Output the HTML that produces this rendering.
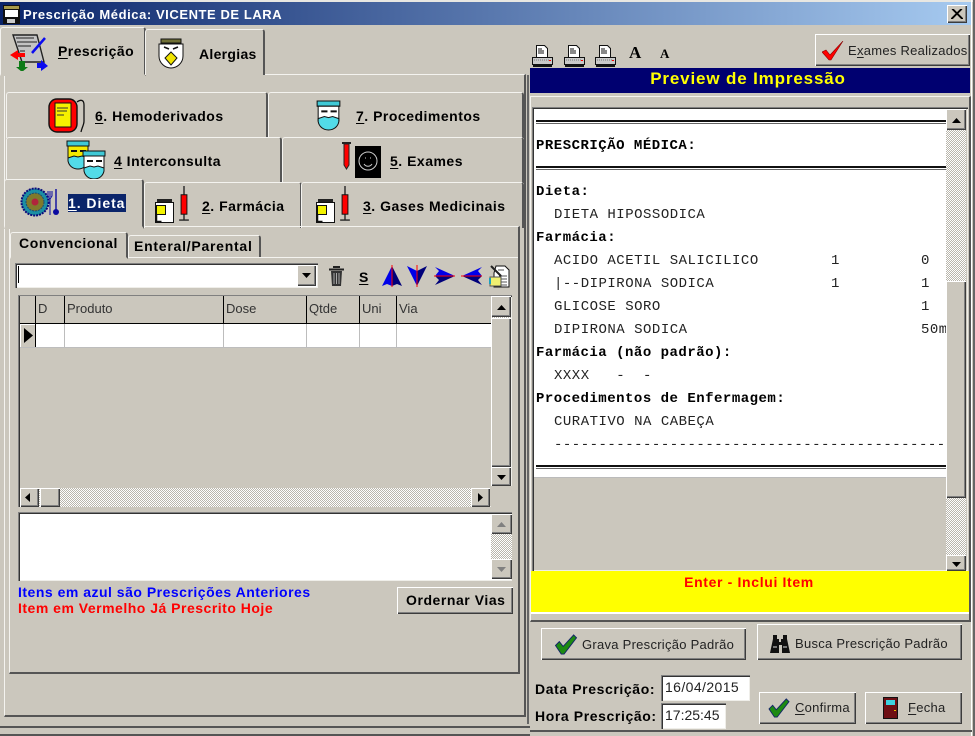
<!DOCTYPE html>
<html><head><meta charset="utf-8"><style>
html,body{margin:0;padding:0;width:975px;height:736px;overflow:hidden;background:#cbc7bd}
body{position:relative;font-family:"Liberation Sans",sans-serif;color:#000}
div,span.a,svg{position:absolute}
.x{position:absolute;white-space:nowrap}
.b{font-weight:bold;font-size:14px;letter-spacing:.5px;line-height:18px}
.n{font-size:13px;line-height:18px;color:#222;letter-spacing:.27px}
.r{background:#cbc7bd;box-shadow:inset 1px 1px #fff,inset -1px -1px #3c3c3c,inset -2px -2px #808080}
.s{background:#fff;box-shadow:inset 1px 1px #808080,inset 2px 2px #333,inset -1px -1px #efeee9}
.t{background:#cbc7bd;box-sizing:border-box;border-top:1px solid #f4f3ef;border-left:1px solid #f4f3ef;border-right:2px solid #555;border-radius:3px 3px 0 0}
.p{box-sizing:border-box;border-style:solid;border-width:1px 2px 2px 1px;border-color:#f4f3ef #555 #555 #f4f3ef}
.d{background:repeating-conic-gradient(#fff 0 25%,#b9b6ac 0 50%) 0 0/2px 2px}
.v{background:#000;width:1px;top:296px;height:27px}
.w{background:#bdbdbd;width:1px;top:324px;height:23px}
.h{font-size:13px;line-height:16px;color:#333;top:301px}
.m{font-family:"Liberation Mono",monospace;font-size:14px;letter-spacing:.5px;line-height:18px;color:#222;white-space:pre}
.mb{font-weight:bold;color:#000}
.rule{left:536px;width:410px;height:4px;border-top:2px solid #111;border-bottom:1px solid #666;box-sizing:border-box}
.l{font-weight:bold;font-size:14px;line-height:17px;letter-spacing:.5px}
u{text-underline-offset:2px}
</style></head><body>
<svg width="0" height="0" style="position:absolute"><defs>
<symbol id="mask" viewBox="0 0 24 30"><path d="M1 1h22v5H1z" fill="#3fc9d6" stroke="#111"/><path d="M2 6h20v14H2z" fill="#fff" stroke="#111"/><path d="M5 10h6v2H5zM14 10h6v2h-6z" fill="#111"/><path d="M2 18l6-2 4 1 4-1 6 2v3c-1 5-5 8-10 8s-9-3-10-8z" fill="#52dbe8" stroke="#111"/></symbol>
<symbol id="bottle" viewBox="0 0 20 24"><path d="M2 0h15v3H2z" fill="#222"/><path d="M.5 3.500h18v20H.500z" fill="#fff" stroke="#111"/><path d="M1.500 6.500h9v9h-9z" fill="#f3f300" stroke="#111"/><path d="M1.500 15.500v7h5" fill="none" stroke="#111" stroke-width="1.500"/></symbol>
<symbol id="syr" viewBox="0 0 10 36"><path d="M5 0v10M5 28v7M0 35h10" stroke="#222" stroke-width="1.4" fill="none"/><rect x="2" y="9" width="6" height="20" fill="#f00" stroke="#111"/></symbol>
<symbol id="printer" viewBox="0 0 21 22"><path d="M4.500.5h8l3 3v10h-11z" fill="#fff" stroke="#111"/><path d="M6 4h4M6 6h6M6 8h6" stroke="#111"/><rect x=".5" y="12.500" width="20" height="7" fill="#c9c9c9" stroke="#111"/><path d="M2 15h15" stroke="#777" stroke-dasharray="1 1"/><rect x="17" y="15" width="2" height="1" fill="#f00"/><path d="M1 21h19" stroke="#111" stroke-width="2"/></symbol>
<symbol id="check" viewBox="0 0 24 22"><path d="M1 12L5 8l4 5L20 1l3 3L10 21H7z" fill="#1c8a12" stroke="#12226a"/></symbol>
<symbol id="upb" viewBox="0 0 9 5"><path d="M4.500 0L9 5H0z"/></symbol>
<symbol id="dnb" viewBox="0 0 9 5"><path d="M0 0h9L4.500 5z"/></symbol>
</defs></svg>

<!-- Window chrome -->
<div style="left:0;top:0;width:975px;height:2px;background:#e8e7e2"></div>
<div style="left:0;top:2px;width:971px;height:23px;background:linear-gradient(90deg,#0a246a,#a6caf0)"></div>
<svg style="left:3px;top:5px" width="17" height="19" viewBox="0 0 17 19"><rect width="17" height="19" fill="#111"/><rect x="1" y="1" width="15" height="3" fill="#a69a4a"/><rect x="2" y="5" width="13" height="7" fill="#fff"/><rect x="4" y="14" width="8" height="4" fill="#ccc"/></svg>
<div class="x" style="left:23px;top:6px;font-weight:bold;font-size:13px;line-height:17px;color:#fff;letter-spacing:.57px">Prescrição Médica: VICENTE DE LARA</div>
<div class="r" style="left:947px;top:5px;width:20px;height:18px"></div>
<svg style="left:951px;top:9px" width="12" height="10"><path d="M1 0l10 10M11 0L1 10M2 0l10 10M10 0L0 10" stroke="#000" stroke-width="1.2"/></svg>
<div style="left:971px;top:0;width:1px;height:736px;background:#fff"></div>
<div style="left:973px;top:0;width:2px;height:736px;background:#666"></div>
<div style="left:0;top:726px;width:530px;height:2px;background:#555"></div>
<div style="left:0;top:734px;width:530px;height:2px;background:#555"></div>
<div style="left:530px;top:730px;width:442px;height:2px;background:#555"></div>
<div style="left:527px;top:75px;width:2px;height:649px;background:#666"></div>

<!-- Left main panel -->
<div class="p" style="left:4px;top:74px;width:522px;height:643px"></div>
<div class="t" style="left:0;top:27px;width:146px;height:49px;border-bottom:2px solid #cbc7bd"></div>
<div class="t" style="left:145px;top:29px;width:120px;height:46px"></div>
<svg style="left:9px;top:33px" width="39" height="38" viewBox="0 0 39 38"><path d="M4 2h24l7 27H13z" fill="#c4c4c4" stroke="#222" stroke-width="1.4"/><path d="M7 5h18M8 9h20M9 13h13M11 18h5" stroke="#222"/><path d="M23 20L36 5" stroke="#0b0bf0" stroke-width="2.500"/><path d="M1 22l8-5v3h7v4H9v3z" fill="#f00"/><path d="M10 28h6v6h3l-6 5-6-5h3z" fill="#0e7a17"/><path d="M28 30h4v-3l7 6-7 5v-3h-4z" fill="#0b0bf0"/></svg>
<div class="x b" style="left:58px;top:42px;letter-spacing:.45px"><u>P</u>rescrição</div>
<svg style="left:158px;top:38px" width="26" height="31" viewBox="0 0 26 31"><path d="M3 1h20v4H3z" fill="#6f6f35" stroke="#111"/><path d="M1 6h24v12c0 7-6 12-12 12S1 25 1 18z" fill="#fff" stroke="#111"/><path d="M6 9l5 2M20 9l-5 2" stroke="#111" stroke-width="1.500"/><path d="M13 14l6 6-6 7-6-7z" fill="#f0e400" stroke="#111"/></svg>
<div class="x b" style="left:199px;top:45px;letter-spacing:.3px">Alergias</div>

<!-- Tab rows -->
<div class="t" style="left:6px;top:92px;width:262px;height:46px"></div>
<div class="t" style="left:268px;top:92px;width:256px;height:46px"></div>
<svg style="left:48px;top:97px" width="38" height="38" viewBox="0 0 38 38"><rect x="1" y="2" width="28" height="33" rx="8" fill="#f00" stroke="#111" stroke-width="1.4"/><rect x="7" y="6" width="16" height="24" fill="#f6f000" stroke="#111"/><path d="M9 11h11M9 14h10M9 18h7" stroke="#333"/><path d="M29 5c4-3 7-2 7 3v16c0 4-2 6-3 11" fill="none" stroke="#111" stroke-width="1.300"/></svg>
<div class="x b" style="left:95px;top:107px"><u>6</u>. Hemoderivados</div>
<svg style="left:316px;top:100px" width="25" height="31"><use href="#mask"/></svg>
<div class="x b" style="left:356px;top:107px"><u>7</u>. Procedimentos</div>

<div class="t" style="left:6px;top:137px;width:276px;height:46px"></div>
<div class="t" style="left:282px;top:137px;width:242px;height:46px"></div>
<svg style="left:66px;top:140px" width="24" height="30" viewBox="0 0 24 30"><path d="M1 1h22v5H1z" fill="#3fc9d6" stroke="#111"/><path d="M2 6h20v14H2z" fill="#f4ea00" stroke="#111"/><path d="M5 10h6v2H5zM14 10h6v2h-6z" fill="#111"/><path d="M2 18l6-2 4 1 4-1 6 2v3c-1 5-5 8-10 8s-9-3-10-8z" fill="#52dbe8" stroke="#111"/></svg>
<svg style="left:82px;top:150px" width="24" height="30"><use href="#mask"/></svg>
<div class="x b" style="left:114px;top:152px"><u>4</u> Interconsulta</div>
<svg style="left:342px;top:142px" width="10" height="28" viewBox="0 0 10 28"><path d="M0 1h9" stroke="#222" stroke-width="2"/><path d="M2 2h5v21l-2.500 4L2 23z" fill="#f00" stroke="#222"/></svg>
<svg style="left:355px;top:146px" width="26" height="32" viewBox="0 0 26 32"><rect width="26" height="32" fill="#000"/><circle cx="13" cy="15" r="9" fill="none" stroke="#ccc"/><path d="M9 18c2 3 6 3 8 0M10 12h1M15 12h1" stroke="#ccc" fill="none"/></svg>
<div class="x b" style="left:390px;top:152px"><u>5</u>. Exames</div>

<div class="t" style="left:144px;top:182px;width:158px;height:46px"></div>
<div class="t" style="left:301px;top:182px;width:223px;height:46px"></div>
<div class="p" style="left:9px;top:226px;width:511px;height:448px"></div>
<div class="t" style="left:4px;top:179px;width:140px;height:50px;border-bottom:3px solid #cbc7bd"></div>
<svg style="left:20px;top:187px" width="42" height="30" viewBox="0 0 42 30"><circle cx="15" cy="15" r="13.500" fill="#1c8fa4" stroke="#0a0a7a" stroke-width="2" stroke-dasharray="2 1"/><circle cx="15" cy="15" r="9" fill="#7f7a2c" stroke="#174a7a" stroke-dasharray="2 1"/><circle cx="15" cy="15" r="3.500" fill="#b0243c"/><path d="M28 4v5l2 3v16M32 4v5l-2 3M30 4v6" stroke="#0a0aa0" fill="none"/><path d="M36 2v22" stroke="#0a0aa0" stroke-width="1.400"/><circle cx="36" cy="25" r="3" fill="#0a0aa0"/></svg>
<div class="x b" style="left:68px;top:194px;width:58px;height:18px;background:#0a246a;color:#fff;letter-spacing:.95px"><u>1</u>. Dieta</div>
<svg style="left:155px;top:199px" width="20" height="24"><use href="#bottle"/></svg>
<svg style="left:179px;top:186px" width="10" height="35"><use href="#syr"/></svg>
<div class="x b" style="left:202px;top:197px"><u>2</u>. Farmácia</div>
<svg style="left:316px;top:199px" width="20" height="24"><use href="#bottle"/></svg>
<svg style="left:340px;top:186px" width="10" height="35"><use href="#syr"/></svg>
<div class="x b" style="left:363px;top:197px"><u>3</u>. Gases Medicinais</div>

<!-- Sub tabs -->
<div style="left:10px;top:257px;width:508px;height:1px;background:#f4f3ef"></div>
<div class="t" style="left:10px;top:232px;width:118px;height:27px;border-bottom:2px solid #cbc7bd"></div>
<div class="t" style="left:128px;top:235px;width:133px;height:22px"></div>
<div class="x b" style="left:19px;top:234px;letter-spacing:.6px">Convencional</div>
<div class="x b" style="left:134px;top:237px;letter-spacing:.75px">Enteral/Parental</div>

<!-- Combo + toolbar -->
<div class="s" style="left:15px;top:263px;width:303px;height:25px"></div>
<div style="left:18px;top:266px;width:1px;height:17px;background:#000"></div>
<div class="r" style="left:297px;top:265px;width:19px;height:21px"></div>
<svg style="left:302px;top:273px" width="9" height="5"><use href="#dnb"/></svg>
<svg style="left:328px;top:265px" width="17" height="22" viewBox="0 0 17 22"><path d="M5 2h7M1 4.500h15" stroke="#222" stroke-width="2"/><path d="M3 6h11l-1 15H4z" fill="#333"/><path d="M6 8v11M8.500 8v11M11 8v11" stroke="#aaa"/></svg>
<div class="x b" style="left:359px;top:268px;font-size:14px;letter-spacing:0"><u>S</u></div>
<svg style="left:382px;top:264px" width="128" height="24" viewBox="0 0 128 24"><path d="M0 22L10 2v20L5 20z" fill="#0000e8"/><path d="M20 22L10 2v20l5-2z" fill="#00007a"/><path d="M10 1v22" stroke="#f00"/><path d="M25 2l10 5v15z" fill="#0000e8"/><path d="M45 2L35 7v15z" fill="#00007a"/><path d="M35 1v22" stroke="#f00"/><path d="M53 3l20 9H53l4-5z" fill="#0000e8"/><path d="M53 21l20-9H53l4 4z" fill="#00007a"/><path d="M52 12h21" stroke="#f00"/><path d="M100 3L80 12h20l-4-5z" fill="#0000e8"/><path d="M100 21L80 12h20l-4 4z" fill="#00007a"/><path d="M79 12h21" stroke="#f00"/><path d="M114 2h9l4 4v17h-15V9z" fill="#fff" stroke="#111"/><path d="M116 6h6M117 12h8M117 15h8M117 18h8M117 21h8" stroke="#555"/><path d="M108 13h11v9h-11z" fill="#f0f070" stroke="#555"/><path d="M109 2l10 10" stroke="#222" stroke-width="2"/><path d="M108 14v6" stroke="#18a0c0" stroke-width="2"/></svg>

<!-- Grid -->
<div class="s" style="left:18px;top:295px;width:494px;height:212px;background:#cbc7bd"></div>
<div style="left:20px;top:296px;width:471px;height:28px;background:#cbc7bd"></div>
<div style="left:20px;top:323px;width:472px;height:1px;background:#000"></div>
<div style="left:35px;top:324px;width:456px;height:23px;background:#fff"></div>
<div style="left:20px;top:347px;width:471px;height:1px;background:#bdbdbd"></div>
<div class="v" style="left:35px"></div><div class="v" style="left:64px"></div><div class="v" style="left:223px"></div><div class="v" style="left:306px"></div><div class="v" style="left:359px"></div><div class="v" style="left:396px"></div>
<div class="w" style="left:64px"></div><div class="w" style="left:223px"></div><div class="w" style="left:306px"></div><div class="w" style="left:359px"></div><div class="w" style="left:396px"></div>
<div class="x h" style="left:38px">D</div><div class="x h" style="left:67px">Produto</div><div class="x h" style="left:226px">Dose</div><div class="x h" style="left:309px">Qtde</div><div class="x h" style="left:362px">Uni</div><div class="x h" style="left:399px">Via</div>
<div style="left:20px;top:324px;width:15px;height:23px;background:#cbc7bd;border-right:1px solid #000;box-shadow:inset 1px 1px #fff"></div>
<svg style="left:24px;top:328px" width="9" height="15"><path d="M0 0l9 7.500L0 15z"/></svg>
<!-- grid scrollbars -->
<div class="d" style="left:491px;top:296px;width:20px;height:190px"></div>
<div class="r" style="left:491px;top:296px;width:20px;height:21px"></div>
<svg style="left:497px;top:305px" width="9" height="5"><use href="#upb"/></svg>
<div class="r" style="left:491px;top:318px;width:20px;height:149px"></div>
<div class="r" style="left:491px;top:467px;width:20px;height:19px"></div>
<svg style="left:497px;top:475px" width="9" height="5"><use href="#dnb"/></svg>
<div style="left:491px;top:486px;width:21px;height:21px;background:#cbc7bd"></div>
<div class="d" style="left:20px;top:488px;width:470px;height:19px"></div>
<div class="r" style="left:20px;top:488px;width:19px;height:19px"></div>
<svg style="left:25px;top:493px" width="5" height="9"><path d="M5 0v9L0 4.500z"/></svg>
<div class="r" style="left:40px;top:488px;width:20px;height:19px"></div>
<div class="r" style="left:471px;top:488px;width:19px;height:19px"></div>
<svg style="left:478px;top:493px" width="5" height="9"><path d="M0 0v9l5-4.500z"/></svg>

<!-- Memo -->
<div class="s" style="left:18px;top:512px;width:494px;height:69px"></div>
<div class="d" style="left:491px;top:514px;width:21px;height:65px"></div>
<div class="r" style="left:491px;top:514px;width:21px;height:20px"></div>
<svg style="left:497px;top:522px" width="9" height="5" fill="#808080"><use href="#upb"/></svg>
<div class="r" style="left:491px;top:559px;width:21px;height:20px"></div>
<svg style="left:497px;top:567px" width="9" height="5" fill="#808080"><use href="#dnb"/></svg>

<div class="x l" style="left:18px;top:584px;color:#00f">Itens em azul são Prescrições Anteriores</div>
<div class="x l" style="left:18px;top:600px;color:#f00">Item em Vermelho Já Prescrito Hoje</div>
<div class="r" style="left:397px;top:587px;width:116px;height:27px"></div>
<div class="x b" style="left:406px;top:591px;letter-spacing:.55px">Ordernar Vias</div>

<!-- Right toolbar -->
<svg style="left:532px;top:45px" width="21" height="22"><use href="#printer"/></svg>
<svg style="left:564px;top:45px" width="21" height="22"><use href="#printer"/></svg>
<svg style="left:595px;top:45px" width="21" height="22"><use href="#printer"/></svg>
<div class="x" style="left:629px;top:43px;font-family:'Liberation Serif',serif;font-weight:bold;font-size:17px;line-height:20px">A</div>
<div class="x" style="left:660px;top:46px;font-family:'Liberation Serif',serif;font-weight:bold;font-size:13px;line-height:16px">A</div>
<div class="r" style="left:815px;top:34px;width:155px;height:32px"></div>
<svg style="left:822px;top:41px" width="22" height="20" viewBox="0 0 22 20"><path d="M0 11l4-2 4 5L21 0 9 19H7z" fill="#f00" stroke="#8a0000" stroke-width=".6"/></svg>
<div class="x n" style="left:848px;top:42px">E<u>x</u>ames Realizados</div>
<div style="left:530px;top:68px;width:440px;height:25px;background:#000070"></div>
<div class="x" style="left:530px;top:69px;width:436px;text-align:center;color:#ff0;font-weight:bold;font-size:17px;line-height:20px;letter-spacing:.85px">Preview de Impressão</div>

<!-- Preview panel -->
<div class="p" style="left:530px;top:96px;width:441px;height:526px"></div>
<div class="s" style="left:532px;top:107px;width:436px;height:464px;background:#cbc7bd"></div>
<div style="left:534px;top:109px;width:412px;height:368px;background:#fff"></div>
<div style="left:534px;top:477px;width:412px;height:1px;background:#bbb"></div>
<div class="rule" style="top:120px"></div>
<div class="rule" style="top:166px"></div>
<div class="rule" style="top:465px"></div>
<div class="x m mb" style="left:536px;top:137px">PRESCRIÇÃO MÉDICA:</div>
<div class="x m mb" style="left:536px;top:183px">Dieta:</div>
<div class="x m" style="left:554px;top:206px">DIETA HIPOSSODICA</div>
<div class="x m mb" style="left:536px;top:229px">Farmácia:</div>
<div class="x m" style="left:554px;top:252px">ACIDO ACETIL SALICILICO</div>
<div class="x m" style="left:831px;top:252px">1</div>
<div class="x m" style="left:921px;top:252px">0</div>
<div class="x m" style="left:554px;top:275px">|--DIPIRONA SODICA</div>
<div class="x m" style="left:831px;top:275px">1</div>
<div class="x m" style="left:921px;top:275px">1</div>
<div class="x m" style="left:554px;top:298px">GLICOSE SORO</div>
<div class="x m" style="left:921px;top:298px">1</div>
<div class="x m" style="left:554px;top:321px">DIPIRONA SODICA</div>
<div class="x m" style="left:921px;top:321px;width:25px;overflow:hidden">50m</div>
<div class="x m mb" style="left:536px;top:344px">Farmácia (não padrão):</div>
<div class="x m" style="left:554px;top:367px">XXXX   -  -</div>
<div class="x m mb" style="left:536px;top:390px">Procedimentos de Enfermagem:</div>
<div class="x m" style="left:554px;top:413px">CURATIVO NA CABEÇA</div>
<div class="x m" style="left:554px;top:436px;width:392px;overflow:hidden">----------------------------------------------</div>
<!-- preview scrollbar -->
<div class="d" style="left:946px;top:109px;width:20px;height:461px"></div>
<div class="r" style="left:946px;top:109px;width:20px;height:21px"></div>
<svg style="left:952px;top:118px" width="9" height="5"><use href="#upb"/></svg>
<div class="r" style="left:946px;top:281px;width:20px;height:217px"></div>
<div class="r" style="left:946px;top:555px;width:20px;height:16px"></div>
<svg style="left:952px;top:562px" width="9" height="5"><use href="#dnb"/></svg>

<!-- Yellow -->
<div style="left:531px;top:571px;width:438px;height:41px;background:#ff0"></div>
<div class="x" style="left:531px;top:574px;width:436px;text-align:center;color:#f00;font-weight:bold;font-size:14px;line-height:17px;letter-spacing:.65px">Enter - Inclui Item</div>
<div style="left:531px;top:612px;width:438px;height:2px;background:#fff"></div>

<!-- Bottom buttons -->
<div class="r" style="left:541px;top:628px;width:205px;height:32px"></div>
<svg style="left:554px;top:634px" width="24" height="21"><use href="#check"/></svg>
<div class="x n" style="left:582px;top:636px">Grava Prescrição Padrão</div>
<div class="r" style="left:757px;top:624px;width:205px;height:36px"></div>
<svg style="left:770px;top:634px" width="20" height="20" viewBox="0 0 20 20"><path d="M3 1h4v4h2v3h2V5h2V1h4v4l3 14h-8V11H9v8H0L3 5z" fill="#111"/><path d="M3 13h4M13 13h4" stroke="#ddd"/></svg>
<div class="x n" style="left:795px;top:635px">Busca Prescrição Padrão</div>
<div class="x b" style="left:535px;top:680px;letter-spacing:.6px">Data Prescrição:</div>
<div class="x b" style="left:535px;top:707px;letter-spacing:.6px">Hora Prescrição:</div>
<div class="s" style="left:661px;top:675px;width:89px;height:26px"></div>
<div class="x" style="left:665px;top:678px;font-size:14px;line-height:18px;color:#222;letter-spacing:.4px">16/04/2015</div>
<div class="s" style="left:661px;top:703px;width:65px;height:26px"></div>
<div class="x" style="left:665px;top:706px;font-size:14px;line-height:18px;color:#222">17:25:45</div>
<div class="r" style="left:759px;top:692px;width:97px;height:32px"></div>
<svg style="left:768px;top:698px" width="22" height="20"><use href="#check"/></svg>
<div class="x n" style="left:795px;top:699px"><u>C</u>onfirma</div>
<div class="r" style="left:865px;top:692px;width:97px;height:32px"></div>
<svg style="left:883px;top:697px" width="15" height="22" viewBox="0 0 15 22"><rect x=".5" y=".5" width="14" height="21" fill="#6e0f14" stroke="#111"/><rect x="3" y="3" width="9" height="5" fill="#3ed2e0"/><rect x="11" y="13" width="2" height="1" fill="#e8c000"/></svg>
<div class="x n" style="left:908px;top:699px"><u>F</u>echa</div>
</body></html>
